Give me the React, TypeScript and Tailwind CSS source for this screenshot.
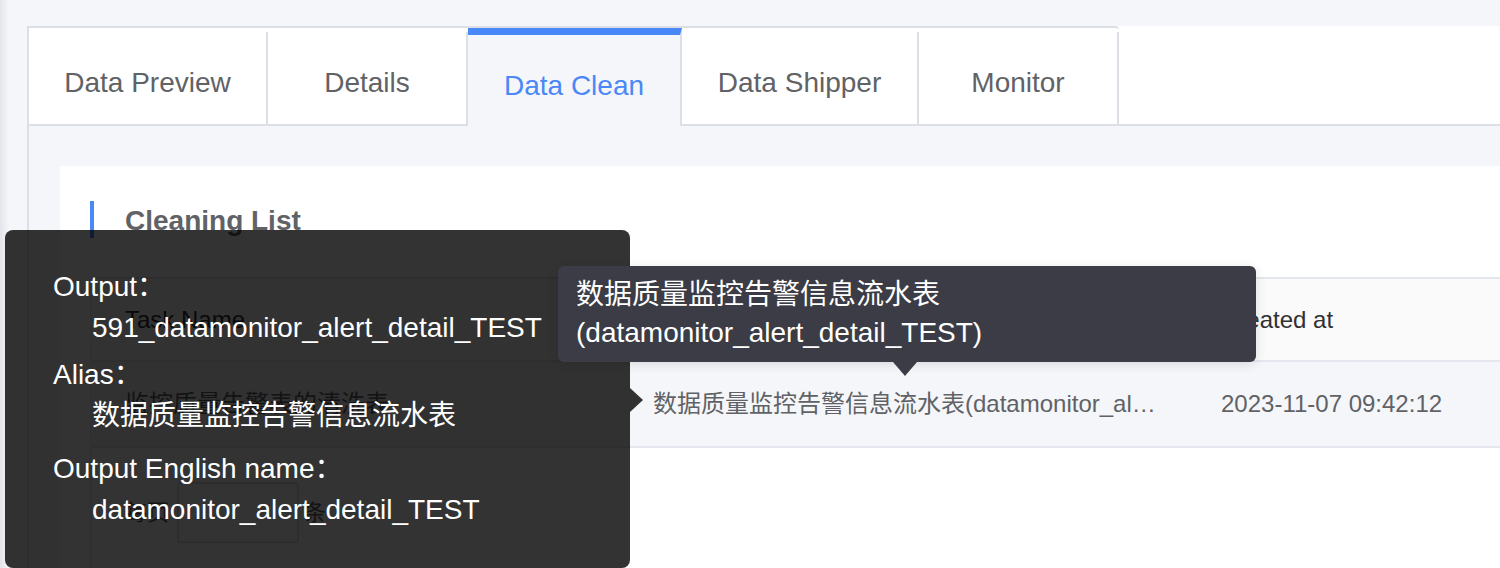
const tabs = [
  { label: "Data Preview", width: "w-[239px]" },
  { label: "Details", width: "w-[200px]" },
  { label: "Data Clean", width: "w-[214px]", active: true },
  { label: "Data Shipper", width: "w-[237px]" },
  { label: "Monitor", width: "w-[200px]" },
];

const outputLines = [
  { label: "Output：", value: "591_datamonitor_alert_detail_TEST" },
  { label: "Alias：", value: "数据质量监控告警信息流水表" },
  { label: "Output English name：", value: "datamonitor_alert_detail_TEST" },
];

export default function App() {
  return (
    <div className="relative h-[568px] w-[1500px] overflow-hidden bg-[linear-gradient(to_right,#e4e5ea,#f5f6fa_9px)] font-['Liberation_Sans','Noto_Sans_CJK_SC',sans-serif]">
      <div className="ml-[27px] mt-[26px] flex h-[542px] flex-col border-l-2 border-[#dcdfe6]">
        {/* Tab bar */}
        <div className="flex h-[100px] shrink-0 border-b-2 border-[#dcdfe6] bg-white">
          <div className="flex rounded-tr-[4px] border-t-2 border-[#dcdfe6]">
            {tabs.map((t) =>
              t.active ? (
                <div
                  key={t.label}
                  className={`relative z-10 -mb-[2px] flex h-[98px] items-center justify-center border-r-2 border-t-[7px] border-r-[#dcdfe6] border-t-[#4a88f7] bg-[#f5f6fa] pt-[11px] text-[28px] text-[#4a88f7] ${t.width}`}
                >
                  {t.label}
                </div>
              ) : (
                <div
                  key={t.label}
                  className={`mt-[4px] flex h-[92px] items-center justify-center border-r-2 border-[#dcdfe6] bg-white pt-[9px] text-[28px] text-[#606266] ${t.width}`}
                >
                  {t.label}
                </div>
              )
            )}
          </div>
        </div>

        {/* Content */}
        <div className="flex flex-1 flex-col bg-[#f5f6fa] pl-[31px] pt-[40px]">
          <div className="flex flex-1 flex-col bg-white pl-[30px] pt-[35px]">
            <div className="flex h-[37px] items-center">
              <div className="h-[37px] w-[4px] bg-[#4a88f7]" />
              <span className="ml-[31px] pt-[3px] text-[28px] font-bold text-[#606266]">Cleaning List</span>
            </div>

            <div className="mt-[39px] flex flex-1 flex-col border-l-2 border-[#ebeef5]">
              <div className="grid h-[85px] grid-cols-[528px_568px_1fr] items-center border-y-2 border-[#e4e7ed] bg-[#fafafb] text-[24px] text-[#303133]">
                <div className="px-[33px]">Task Name</div>
                <div className="px-[33px]">Output</div>
                <div className="px-[33px]">Created at</div>
              </div>
              <div className="grid h-[86px] grid-cols-[528px_568px_1fr] items-center border-b-2 border-[#e4e7ed] bg-[#f5f6f9] text-[24px] text-[#606266]">
                <div className="px-[33px]">监控质量告警表的清洗表</div>
                <div className="overflow-hidden text-ellipsis whitespace-nowrap pl-[33px] pr-[22px]">
                  数据质量监控告警信息流水表(datamonitor_alert_detail_TEST)
                </div>
                <div className="px-[33px]">2023-11-07 09:42:12</div>
              </div>

              <div className="mt-[34px] flex h-[61px] items-center pl-[33px] text-[22px] text-[#606266]">
                <span>每页</span>
                <div className="ml-[8px] h-[61px] w-[122px] rounded-[4px] border-2 border-[#dcdfe6]" />
                <span className="ml-[5px]">条</span>
              </div>
            </div>
          </div>
        </div>
      </div>

      {/* Output column tooltip */}
      <div className="absolute left-[5px] top-[230px] h-[338px] w-[625px] rounded-[8px] bg-black/80 pl-[48px] pt-[36px] text-[28px] leading-[41px] text-white">
        {outputLines.map((l, i) => (
          <div key={l.label} className={i === 1 ? "mt-[6px]" : i === 2 ? "mt-[12px]" : ""}>
            <div>{l.label}</div>
            <div className="pl-[39px]">{l.value}</div>
          </div>
        ))}
        <div className="absolute left-full top-[158px] h-0 w-0 border-y-[12px] border-l-[13px] border-y-transparent border-l-black/80" />
      </div>

      {/* Cell tooltip */}
      <div className="absolute left-[558px] top-[266px] h-[96px] w-[698px] rounded-[6px] bg-[#3b3c45] pl-[18px] pt-[10px] text-[28px] leading-[38px] text-white shadow-[0_2px_12px_rgba(0,0,0,0.12)]">
        <div>数据质量监控告警信息流水表</div>
        <div>(datamonitor_alert_detail_TEST)</div>
        <div className="absolute left-[335px] top-full h-0 w-0 border-x-[12px] border-t-[14px] border-x-transparent border-t-[#3b3c45]" />
      </div>
    </div>
  );
}
